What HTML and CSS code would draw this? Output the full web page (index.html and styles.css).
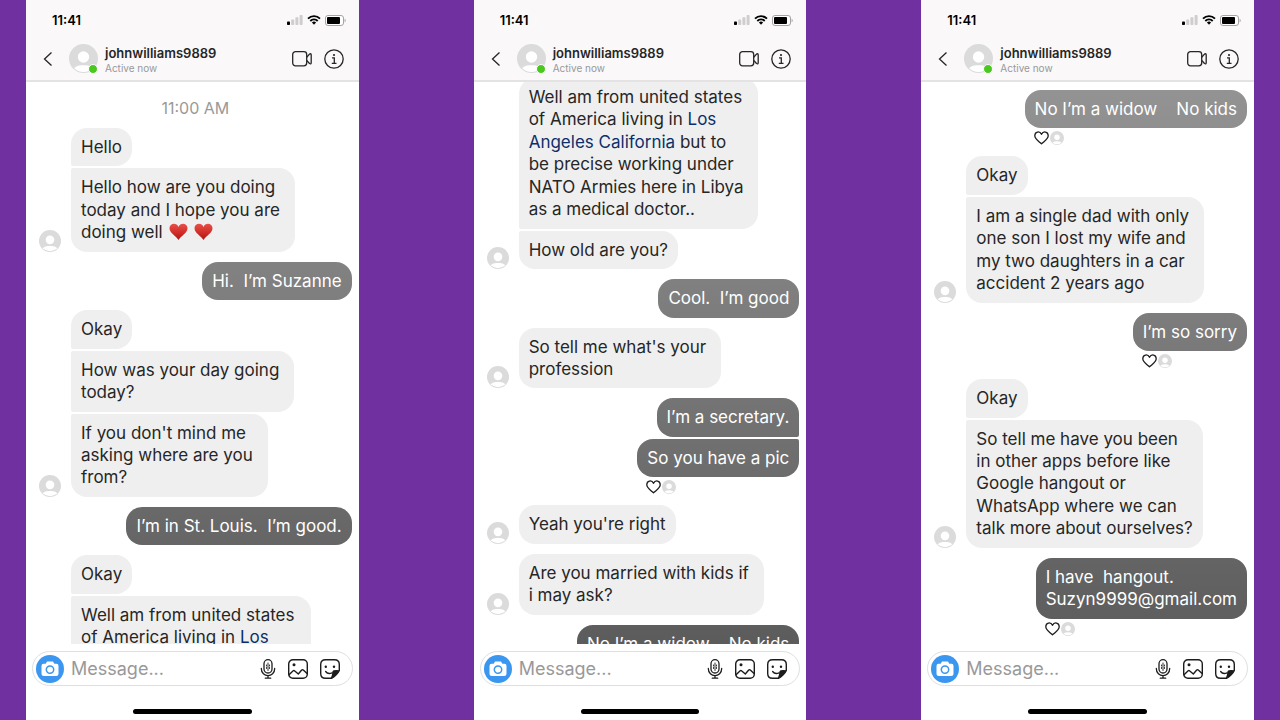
FILE: index.html
```
<!DOCTYPE html>
<html lang="en">
<head>
<meta charset="utf-8">
<meta name="viewport" content="width=device-width, initial-scale=1">
<title>Conversation</title>
<link rel="stylesheet" href="styles.css">
</head>
<body>
<svg class="sprite" aria-hidden="true">
  <defs>
    <linearGradient id="heart-fill" x1="0" y1="0" x2="0" y2="1">
      <stop offset="0" stop-color="#e8504a"/>
      <stop offset="0.5" stop-color="#d32f2a"/>
      <stop offset="1" stop-color="#ad1414"/>
    </linearGradient>
    <clipPath id="avatar-clip"><circle cx="14" cy="14" r="13"/></clipPath>
  </defs>
  <symbol id="avatar" viewBox="0 0 28 28">
    <circle cx="14" cy="14" r="14" fill="#dbdbdb"/>
    <g clip-path="url(#avatar-clip)" fill="#fff">
      <circle cx="14" cy="12.500" r="5.500"/>
      <path d="M4 27c0-5 4-6.500 10-6.500s10 1.500 10 6.500z"/>
    </g>
  </symbol>
  <symbol id="back" viewBox="0 0 10 16">
    <path d="M8.500 1.500 1.500 8l7 6.500" fill="none" stroke="#262626" stroke-width="1.300"/>
  </symbol>
  <symbol id="signal" viewBox="0 0 16 10">
    <rect x="0" y="6.500" width="3" height="3.500" rx="0.800" fill="#000"/>
    <rect x="4.200" y="4.500" width="3" height="5.500" rx="0.800" fill="#cfcdce"/>
    <rect x="8.400" y="2.300" width="3" height="7.700" rx="0.800" fill="#cfcdce"/>
    <rect x="12.600" y="0" width="3" height="10" rx="0.800" fill="#cfcdce"/>
  </symbol>
  <symbol id="wifi" viewBox="0 0 14 10">
    <path d="M1 3.600a8.600 8.600 0 0 1 12 0M3.300 6a5.300 5.300 0 0 1 7.400 0" fill="none" stroke="#000" stroke-width="1.900"/>
    <path d="M4.900 7.500a3 3 0 0 1 4.200 0L7 9.800z" fill="#000"/>
  </symbol>
  <symbol id="battery" viewBox="0 0 21 11">
    <rect x="0.500" y="0.500" width="18" height="10" rx="2.500" fill="#fff" stroke="#a5a3a4"/>
    <rect x="2" y="2" width="13" height="7" rx="1" fill="#000"/>
    <path d="M19.600 3.800c1.500.4 1.500 3 0 3.400z" fill="#a5a3a4"/>
  </symbol>
  <symbol id="video" viewBox="0 0 20 16">
    <g fill="none" stroke="#262626" stroke-width="1.300" stroke-linejoin="round">
      <rect x="0.700" y="0.700" width="14" height="14.200" rx="2.800"/>
      <path d="M14.700 6.200l2.800-3.100q1.700-1 1.700.8v7.800q0 1.800-1.700.8l-2.800-3.100"/>
    </g>
  </symbol>
  <symbol id="info" viewBox="0 0 20 20">
    <circle cx="10" cy="10" r="9.200" fill="none" stroke="#262626" stroke-width="1.300"/>
    <circle cx="10" cy="6" r="1.100" fill="#262626"/>
    <path d="M8 8.900h2.300v5.300M7.800 14.300h4.700" fill="none" stroke="#262626" stroke-width="1.300"/>
  </symbol>
  <symbol id="heart" viewBox="0 0 18 18">
    <path d="M9 17C6.500 13 0 10 0 5.300 0-.2 7.300-.8 9 3.900 10.700-.8 18-.2 18 5.300 18 10 11.500 13 9 17z" fill="url(#heart-fill)"/>
  </symbol>
  <symbol id="like" viewBox="0 0 15 14">
    <path d="M7.500 12.800C4.500 10 .8 8 .8 4.700.8.400 5.800-.3 7.500 3.300 9.200-.3 14.200.4 14.200 4.700c0 3.300-3.700 5.300-6.700 8.100z" fill="none" stroke="#1c1c1c" stroke-width="1.300" stroke-linejoin="round"/>
  </symbol>
  <symbol id="camera" viewBox="0 0 18 16">
    <path d="M6 .5h6l1.300 2.300h2.200Q17.500 2.800 17.500 5v7.500q0 2.500-2.500 2.500H3Q.5 15 .5 12.500V5q0-2.200 2-2.200h2.200z" fill="#fff"/>
    <circle cx="9" cy="8.600" r="3.700" fill="none" stroke="#3b96ef" stroke-width="1.500"/>
  </symbol>
  <symbol id="mic" viewBox="0 0 16 20">
    <g fill="none" stroke="#1c1c1c" stroke-width="1.300" stroke-linecap="round">
      <rect x="4" y="0.700" width="8" height="13.300" rx="4"/>
      <path d="M1.300 9.500c0 9.500 13.400 9.500 13.400 0M8 16.700v2.400M5.300 19.200h5.400"/>
      <path d="M8 4v7.500M6.500 6v1M9.500 6v1M6.500 8.500v1M9.500 8.500v1" stroke-width="0.900"/>
    </g>
  </symbol>
  <symbol id="photo" viewBox="0 0 20 20">
    <g fill="none" stroke="#1c1c1c" stroke-width="1.400" stroke-linejoin="round">
      <rect x="0.700" y="0.700" width="18.600" height="18.600" rx="4.200"/>
      <path d="M.8 16l4.400-4.200q.8-.6 1.600.2l3.500 3 3.400-4q.8-.7 1.600 0l4 3.800"/>
    </g>
    <circle cx="6" cy="5.700" r="1.500" fill="#1c1c1c"/>
  </symbol>
  <symbol id="sticker" viewBox="0 0 20 20">
    <path d="M11.500 19.300H5.500Q.7 19.300.7 14.500V5.500Q.7.700 5.500.7h9q4.800 0 4.800 4.800v6q-2.300 4.800-7.800 7.800z" fill="none" stroke="#1c1c1c" stroke-width="1.400"/>
    <path d="M19.500 11.300q-6.500-.7-7 1-.2 3.500-1.800 7 5-1 8.800-8z" fill="#1c1c1c"/>
    <circle cx="5.800" cy="7.800" r="1.200" fill="#1c1c1c"/>
    <circle cx="14" cy="7.800" r="1.200" fill="#1c1c1c"/>
    <path d="M5.600 12.500q2.400 3.200 6.500 1.300" fill="none" stroke="#1c1c1c" stroke-width="1.300" stroke-linecap="round"/>
  </symbol>
</svg>

<main class="board">
  <section class="phone" aria-label="Conversation, part 1">
    <header class="top">
      <div class="status">
        <span class="clock">11:41</span>
        <span class="indicators"><svg class="signal"><use href="#signal"/></svg><svg class="wifi"><use href="#wifi"/></svg><svg class="battery"><use href="#battery"/></svg></span>
      </div>
      <div class="contact">
        <button class="icon-button back" aria-label="Back"><svg><use href="#back"/></svg></button>
        <span class="profile"><svg><use href="#avatar"/></svg><span class="online"></span></span>
        <div class="who"><h2 class="name">johnwilliams9889</h2><p class="presence">Active now</p></div>
        <button class="icon-button video" aria-label="Video call"><svg><use href="#video"/></svg></button>
        <button class="icon-button info" aria-label="Details"><svg><use href="#info"/></svg></button>
      </div>
    </header>
    <div class="thread thread-first">
      <p class="stamp">11:00 AM</p>
      <div class="group received">
        <svg class="face"><use href="#avatar"/></svg>
        <div class="stack">
          <p class="bubble">Hello</p>
          <p class="bubble">Hello how are you doing 
today and I hope you are 
doing well <svg class="heart" role="img" aria-label="heart"><use href="#heart"/></svg> <svg class="heart" role="img" aria-label="heart"><use href="#heart"/></svg></p>
        </div>
      </div>
      <div class="group sent"><div class="stack"><p class="bubble">Hi.  I’m Suzanne</p></div></div>
      <div class="group received">
        <svg class="face"><use href="#avatar"/></svg>
        <div class="stack">
          <p class="bubble">Okay</p>
          <p class="bubble">How was your day going 
today?</p>
          <p class="bubble">If you don't mind me 
asking where are you 
from?</p>
        </div>
      </div>
      <div class="group sent"><div class="stack"><p class="bubble">I’m in St. Louis.  I’m good.</p></div></div>
      <div class="group received">
        <svg class="face"><use href="#avatar"/></svg>
        <div class="stack">
          <p class="bubble">Okay</p>
          <p class="bubble">Well am from united states 
of America living in <a class="place" href="#">Los 
Angeles California</a> but to 
be precise working under 
NATO Armies here in Libya 
as a medical doctor..</p>
        </div>
      </div>
    </div>
    <footer class="bottom">
      <form class="composer">
        <button class="camera" type="button" aria-label="Camera"><svg><use href="#camera"/></svg></button>
        <input class="entry" type="text" aria-label="Message" placeholder="Message...">
        <button class="icon-button mic" type="button" aria-label="Voice message"><svg><use href="#mic"/></svg></button>
        <button class="icon-button tool" type="button" aria-label="Photo"><svg><use href="#photo"/></svg></button>
        <button class="icon-button tool" type="button" aria-label="Sticker"><svg><use href="#sticker"/></svg></button>
      </form>
      <div class="home-bar"></div>
    </footer>
  </section>

  <section class="phone" aria-label="Conversation, part 2">
    <header class="top">
      <div class="status">
        <span class="clock">11:41</span>
        <span class="indicators"><svg class="signal"><use href="#signal"/></svg><svg class="wifi"><use href="#wifi"/></svg><svg class="battery"><use href="#battery"/></svg></span>
      </div>
      <div class="contact">
        <button class="icon-button back" aria-label="Back"><svg><use href="#back"/></svg></button>
        <span class="profile"><svg><use href="#avatar"/></svg><span class="online"></span></span>
        <div class="who"><h2 class="name">johnwilliams9889</h2><p class="presence">Active now</p></div>
        <button class="icon-button video" aria-label="Video call"><svg><use href="#video"/></svg></button>
        <button class="icon-button info" aria-label="Details"><svg><use href="#info"/></svg></button>
      </div>
    </header>
    <div class="thread thread-second">
      <div class="group received">
        <svg class="face"><use href="#avatar"/></svg>
        <div class="stack">
          <p class="bubble">Well am from united states 
of America living in <a class="place" href="#">Los 
Angeles California</a> but to 
be precise working under 
NATO Armies here in Libya 
as a medical doctor..</p>
          <p class="bubble">How old are you?</p>
        </div>
      </div>
      <div class="group sent"><div class="stack"><p class="bubble">Cool.  I’m good</p></div></div>
      <div class="group received">
        <svg class="face"><use href="#avatar"/></svg>
        <div class="stack"><p class="bubble">So tell me what's your 
profession</p></div>
      </div>
      <div class="group sent">
        <div class="stack">
          <p class="bubble">I’m a secretary.</p>
          <p class="bubble">So you have a pic</p>
          <div class="reaction"><svg class="like"><use href="#like"/></svg><svg class="liker"><use href="#avatar"/></svg></div>
        </div>
      </div>
      <div class="group received">
        <svg class="face"><use href="#avatar"/></svg>
        <div class="stack"><p class="bubble">Yeah you're right</p></div>
      </div>
      <div class="group received">
        <svg class="face"><use href="#avatar"/></svg>
        <div class="stack"><p class="bubble">Are you married with kids if 
i may ask?</p></div>
      </div>
      <div class="group sent"><div class="stack"><p class="bubble">No I’m a widow    No kids</p></div></div>
    </div>
    <footer class="bottom">
      <form class="composer">
        <button class="camera" type="button" aria-label="Camera"><svg><use href="#camera"/></svg></button>
        <input class="entry" type="text" aria-label="Message" placeholder="Message...">
        <button class="icon-button mic" type="button" aria-label="Voice message"><svg><use href="#mic"/></svg></button>
        <button class="icon-button tool" type="button" aria-label="Photo"><svg><use href="#photo"/></svg></button>
        <button class="icon-button tool" type="button" aria-label="Sticker"><svg><use href="#sticker"/></svg></button>
      </form>
      <div class="home-bar"></div>
    </footer>
  </section>

  <section class="phone" aria-label="Conversation, part 3">
    <header class="top">
      <div class="status">
        <span class="clock">11:41</span>
        <span class="indicators"><svg class="signal"><use href="#signal"/></svg><svg class="wifi"><use href="#wifi"/></svg><svg class="battery"><use href="#battery"/></svg></span>
      </div>
      <div class="contact">
        <button class="icon-button back" aria-label="Back"><svg><use href="#back"/></svg></button>
        <span class="profile"><svg><use href="#avatar"/></svg><span class="online"></span></span>
        <div class="who"><h2 class="name">johnwilliams9889</h2><p class="presence">Active now</p></div>
        <button class="icon-button video" aria-label="Video call"><svg><use href="#video"/></svg></button>
        <button class="icon-button info" aria-label="Details"><svg><use href="#info"/></svg></button>
      </div>
    </header>
    <div class="thread thread-third">
      <div class="group sent">
        <div class="stack">
          <p class="bubble">No I’m a widow    No kids</p>
          <div class="reaction"><svg class="like"><use href="#like"/></svg><svg class="liker"><use href="#avatar"/></svg></div>
        </div>
      </div>
      <div class="group received">
        <svg class="face"><use href="#avatar"/></svg>
        <div class="stack">
          <p class="bubble">Okay</p>
          <p class="bubble">I am a single dad with only 
one son I lost my wife and 
my two daughters in a car 
accident 2 years ago</p>
        </div>
      </div>
      <div class="group sent">
        <div class="stack">
          <p class="bubble">I’m so sorry</p>
          <div class="reaction"><svg class="like"><use href="#like"/></svg><svg class="liker"><use href="#avatar"/></svg></div>
        </div>
      </div>
      <div class="group received">
        <svg class="face"><use href="#avatar"/></svg>
        <div class="stack">
          <p class="bubble">Okay</p>
          <p class="bubble">So tell me have you been 
in other apps before like 
Google hangout or 
WhatsApp where we can 
talk more about ourselves?</p>
        </div>
      </div>
      <div class="group sent">
        <div class="stack">
          <p class="bubble">I have  hangout. 
Suzyn9999@gmail.com</p>
          <div class="reaction"><svg class="like"><use href="#like"/></svg><svg class="liker"><use href="#avatar"/></svg></div>
        </div>
      </div>
    </div>
    <footer class="bottom">
      <form class="composer">
        <button class="camera" type="button" aria-label="Camera"><svg><use href="#camera"/></svg></button>
        <input class="entry" type="text" aria-label="Message" placeholder="Message...">
        <button class="icon-button mic" type="button" aria-label="Voice message"><svg><use href="#mic"/></svg></button>
        <button class="icon-button tool" type="button" aria-label="Photo"><svg><use href="#photo"/></svg></button>
        <button class="icon-button tool" type="button" aria-label="Sticker"><svg><use href="#sticker"/></svg></button>
      </form>
      <div class="home-bar"></div>
    </footer>
  </section>
</main>
</body>
</html>
```
FILE: styles.css
```
* {
  box-sizing: border-box;
}

body,
h2,
p {
  margin: 0;
}

body {
  background: #7030a0;
  color: #262626;
  font-family: Inter, "Liberation Sans", sans-serif;
}

svg {
  display: block;
}

button {
  border: 0;
  padding: 0;
  background: none;
}

.sprite {
  position: absolute;
  width: 0;
  height: 0;
}

.board {
  display: grid;
  grid-template-columns: repeat(3, minmax(0, 1fr));
  gap: 115px;
  height: 100vh;
  padding: 0 26px;
}

.phone {
  display: flex;
  flex-direction: column;
  min-height: 0;
  background: #fff;
}

/* Header */

.top {
  flex: none;
  padding-bottom: 3px;
  border-bottom: 2px solid #e4e2e3;
  background: #faf8f9;
}

.status {
  display: flex;
  align-items: center;
  justify-content: space-between;
  height: 40px;
  padding: 0 13px 0 26px;
}

.clock {
  color: #000;
  font-size: 13px;
  font-weight: 600;
}

.indicators {
  display: flex;
  align-items: center;
  gap: 4px;
}

.signal {
  width: 16px;
  height: 10px;
}

.wifi {
  width: 14px;
  height: 10px;
}

.battery {
  width: 21px;
  height: 11px;
}

.contact {
  display: flex;
  align-items: center;
  height: 37px;
  padding: 0 15px 0 17px;
}

.icon-button {
  flex: none;
}

.icon-button svg {
  width: 100%;
  height: 100%;
}

.back {
  width: 10px;
  height: 16px;
}

.profile {
  position: relative;
  flex: none;
  width: 29px;
  height: 29px;
  margin: 0 7px 0 16px;
}

.profile svg {
  width: 100%;
  height: 100%;
}

.online {
  position: absolute;
  right: 0;
  bottom: -1px;
  width: 10px;
  height: 10px;
  border: 1px solid #fff;
  border-radius: 50%;
  background: #4bc820;
}

.who {
  flex: 1;
  min-width: 0;
}

.name {
  padding-top: 2px;
  font-size: 13px;
  font-weight: 600;
  line-height: 16px;
}

.presence {
  color: #999;
  font-size: 10px;
  font-weight: 400;
  line-height: 14px;
}

.video {
  width: 20px;
  height: 16px;
  margin-right: 12px;
}

.info {
  width: 20px;
  height: 20px;
}

/* Messages */

.thread {
  display: flex;
  flex: 1;
  flex-direction: column;
  gap: 10px;
  min-height: 0;
  padding: 0 7px 0 13px;
  overflow: hidden;
}

.thread-first {
  padding-top: 16px;
}

.thread-second > .group:first-child {
  margin-top: -4px;
}

.thread-third {
  padding-top: 8px;
}

.stamp {
  color: #999;
  font-size: 16px;
  line-height: 20px;
  text-align: center;
}

.group {
  display: flex;
  flex: none;
  align-items: flex-end;
  gap: 10px;
}

.face {
  flex: none;
  width: 22px;
  height: 22px;
}

.stack {
  display: flex;
  flex-direction: column;
  align-items: flex-start;
  gap: 2px;
}

.bubble {
  padding: 8px 10px;
  border-radius: 16px;
  background: #efefef;
  font-size: 17px;
  line-height: 1.32;
  white-space: pre;
}

.received .bubble:not(:last-child) {
  border-bottom-left-radius: 2px;
}

.received .bubble + .bubble {
  border-top-left-radius: 2px;
}

.sent {
  justify-content: flex-end;
}

.sent .stack {
  align-items: flex-end;
}

/* One tint runs down the whole window, so lower bubbles come out darker. */
.sent .bubble {
  background: linear-gradient(#9c9c9c, #545454) fixed;
  color: #fff;
}

.sent .bubble:has(+ .bubble) {
  border-bottom-right-radius: 2px;
}

.sent .bubble + .bubble {
  border-top-right-radius: 2px;
}

.place {
  color: #0c2f6b;
  text-decoration: none;
}

.heart {
  display: inline-block;
  width: 19px;
  height: 18px;
  margin: 0 1px;
  vertical-align: -3px;
}

.reaction {
  display: flex;
  align-self: stretch;
  align-items: center;
  gap: 1px;
  height: 16px;
  padding-left: 9px;
}

.like {
  width: 15px;
  height: 14px;
}

.liker {
  width: 14px;
  height: 14px;
}

/* Composer */

.bottom {
  flex: none;
  padding: 7px 6px 6px;
}

.composer {
  display: flex;
  align-items: center;
  height: 35px;
  padding: 0 12px 0 3px;
  border: 1px solid #dfdfdf;
  border-radius: 18px;
}

.camera {
  display: flex;
  flex: none;
  align-items: center;
  justify-content: center;
  width: 28px;
  height: 28px;
  border-radius: 50%;
  background: #3b96ef;
}

.camera svg {
  width: 18px;
  height: 16px;
}

.entry {
  flex: 1;
  min-width: 0;
  padding: 0 0 0 7px;
  border: 0;
  outline: 0;
  background: none;
  color: #262626;
  font: inherit;
  font-size: 18px;
}

.entry::placeholder {
  color: #999;
}

.mic {
  width: 16px;
  height: 20px;
}

.tool {
  width: 20px;
  height: 20px;
  margin-left: 12px;
}

.home-bar {
  width: 37%;
  height: 5px;
  margin: 23px auto 0;
  border-radius: 3px;
  background: #000;
}
```
